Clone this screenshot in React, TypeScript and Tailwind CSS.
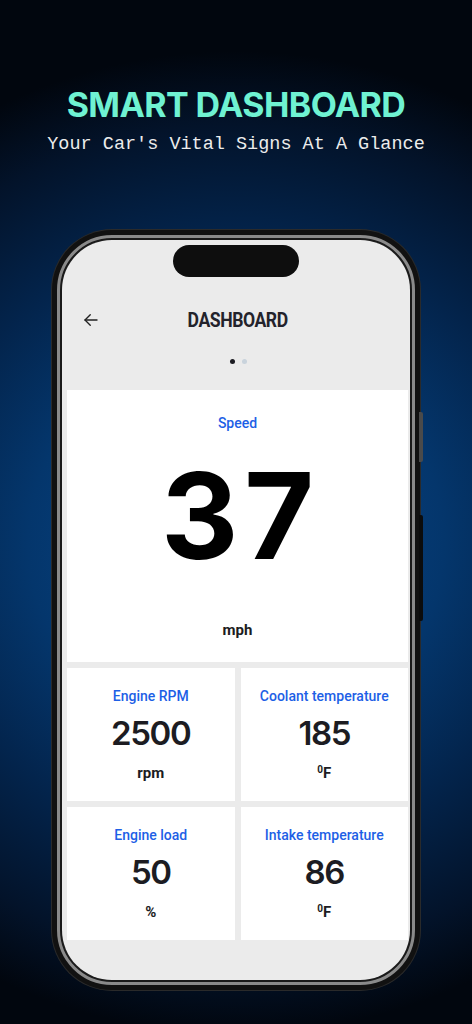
import { FC } from 'react'

const Metric: FC<{ label: string; value: string; unit: React.ReactNode }> = ({ label, value, unit }) => (
  <div className="bg-white h-[133px] flex flex-col items-center pt-[18px]">
    <div className="h-[20px] leading-[20px] text-[14px] font-medium text-[#1d5fe6]">{label}</div>
    <div className="mt-[11px] h-[34px] leading-none text-[33px] font-semibold tracking-[-1.4px] text-[#1c1c22] font-['Inter',sans-serif]">
      {value}
    </div>
    <div className="mt-[12px] h-[20px] leading-[20px] text-[15px] font-bold text-[#1c1c22]">{unit}</div>
  </div>
)

const Fahrenheit = () => (
  <span>
    <span className="relative top-[-5px] text-[10px]">0</span>F
  </span>
)

export default function App() {
  return (
    <div className="w-[472px] h-[1024px] overflow-hidden bg-[radial-gradient(ellipse_110%_48%_at_50%_53%,#0a4a90_0%,#04366c_40%,#03244c_62%,#03132a_85%,#01060e_100%)] flex flex-col items-center font-['Roboto',sans-serif]">
      <h1 className="mt-[87px] h-[36px] leading-[36px] text-[34px] font-bold tracking-[-0.6px] text-[#6ff2d2] font-['Inter',sans-serif]">
        SMART DASHBOARD
      </h1>
      <p className="mt-[12px] h-[20px] leading-[20px] text-[18.5px] text-[#ececec] font-['Liberation_Mono',monospace]">
        Your Car's Vital Signs At A Glance
      </p>

      <div className="relative mt-[75px] w-[368px] h-[760px] rounded-[60px] bg-[#111] p-[5px] shadow-[0_0_0_1px_#2a2a2a]">
        <div className="absolute right-[-3px] top-[182px] w-[4px] h-[50px] rounded-r-[2px] bg-[#4a4a4a]" />
        <div className="absolute right-[-3px] top-[285px] w-[4px] h-[106px] rounded-r-[2px] bg-[#0c0c0c]" />
        <div className="h-full rounded-[55px] border-[3px] border-[#8a8a8a] bg-[#1a1a1a] p-[2px]">
          <div className="h-full rounded-[50px] overflow-hidden bg-[#ebebeb] flex flex-col">
            <div className="h-[150px] flex flex-col items-center">
              <div className="mt-[5px] w-[126px] h-[32px] rounded-full bg-[#0e0e0e]" />
              <div className="mt-[29px] w-full h-[28px] flex items-center relative">
                <svg className="absolute left-[20px]" width="18" height="18" viewBox="0 0 24 24" fill="none" stroke="#222" strokeWidth="1.8" strokeLinecap="round" strokeLinejoin="round">
                  <path d="M20 12H4" />
                  <path d="M11 5l-7 7 7 7" />
                </svg>
                <div className="mx-auto pl-[4px] text-[20px] font-bold tracking-[-0.5px] text-[#23232b] scale-x-[0.88]">DASHBOARD</div>
              </div>
              <div className="mt-[25px] flex gap-[7px] pl-[4px]">
                <span className="w-[5px] h-[5px] rounded-full bg-[#1c1c22]" />
                <span className="w-[5px] h-[5px] rounded-full bg-[#c9d3dc]" />
              </div>
            </div>

            <div className="pl-[5px] pr-[2px] flex flex-col gap-[6px]">
              <div className="bg-white h-[272px] flex flex-col items-center pt-[23px]">
                <div className="h-[20px] leading-[20px] text-[14px] font-medium text-[#1d5fe6]">Speed</div>
                <div className="mt-[23px] h-[118px] leading-none text-[120px] font-bold tracking-[6px] pl-[6px] text-black font-['Inter',sans-serif]">
                  37
                </div>
                <div className="mt-[46px] h-[20px] leading-[20px] text-[15px] font-bold text-[#1c1c22]">mph</div>
              </div>
              <div className="grid grid-cols-2 gap-[6px]">
                <Metric label="Engine RPM" value="2500" unit="rpm" />
                <Metric label="Coolant temperature" value="185" unit={<Fahrenheit />} />
                <Metric label="Engine load" value="50" unit="%" />
                <Metric label="Intake temperature" value="86" unit={<Fahrenheit />} />
              </div>
            </div>
          </div>
        </div>
      </div>
    </div>
  )
}
